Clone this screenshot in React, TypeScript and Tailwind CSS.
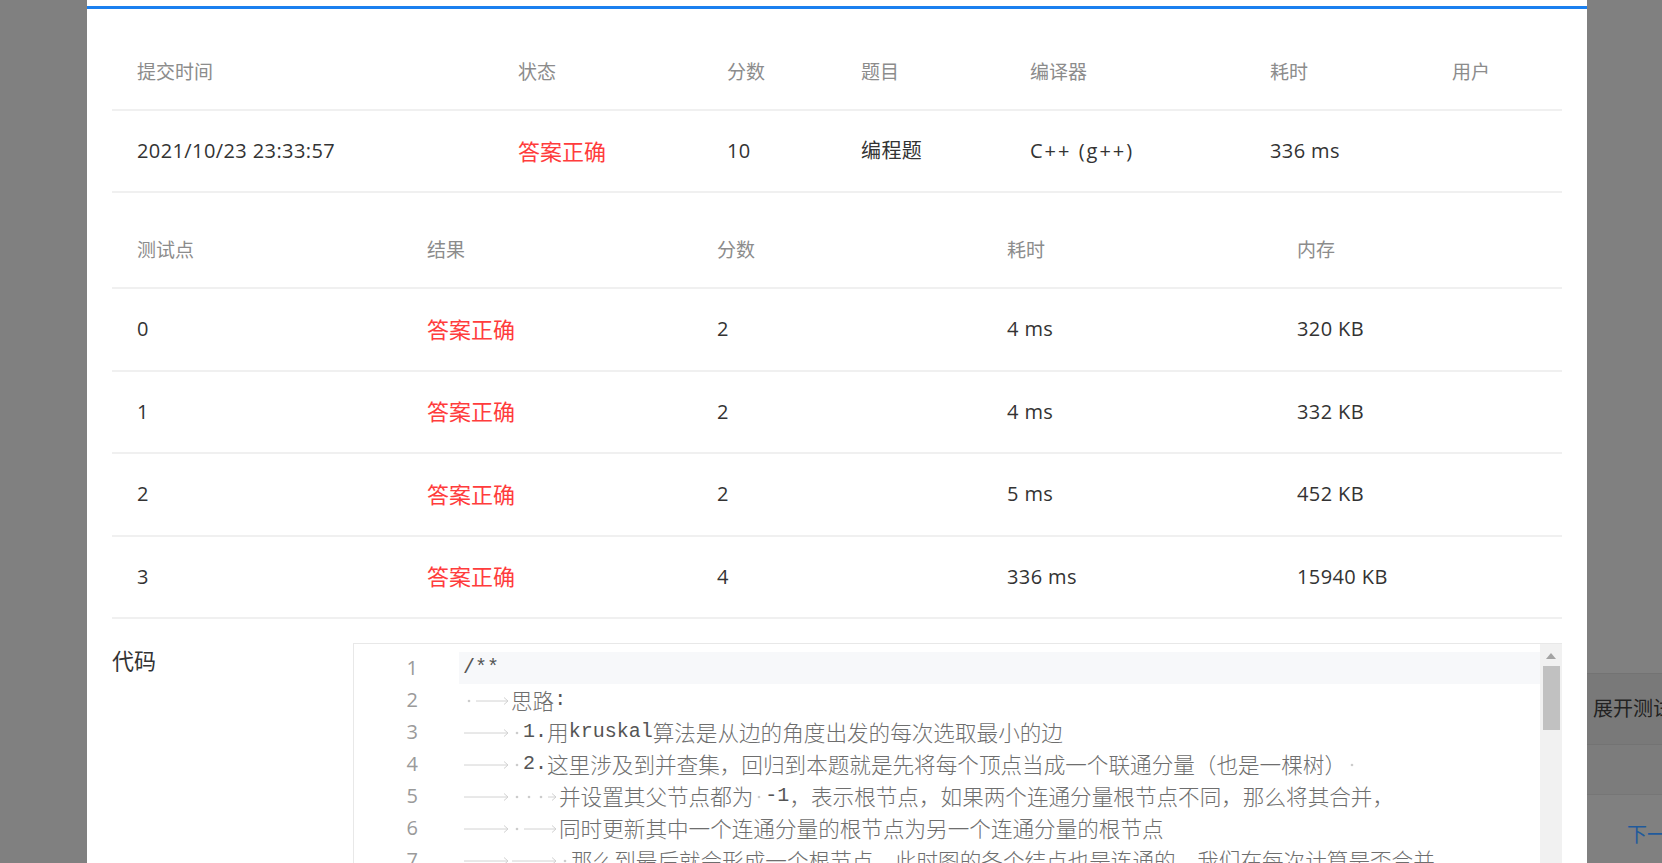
import React from "react";

type Tok =
  | { k: "tab"; w: number }
  | { k: "sp" }
  | { k: "m"; s: string }
  | { k: "c"; s: string };

const T = (w: number): Tok => ({ k: "tab", w });
const S: Tok = { k: "sp" };
const M = (s: string): Tok => ({ k: "m", s });
const C = (s: string): Tok => ({ k: "c", s });

const codeLines: Tok[][] = [
  [M("/**")],
  [S, T(36), C("思路"), M(":")],
  [T(48), S, M("1."), C("用"), M("kruskal"), C("算法是从边的角度出发的每次选取最小的边")],
  [T(48), S, M("2."), C("这里涉及到并查集，回归到本题就是先将每个顶点当成一个联通分量（也是一棵树）"), S],
  [T(48), S, S, S, T(12), C("并设置其父节点都为"), S, M("-1"), C("，表示根节点，如果两个连通分量根节点不同，那么将其合并，")],
  [T(48), S, T(36), C("同时更新其中一个连通分量的根节点为另一个连通分量的根节点")],
  [T(48), T(48), S, C("那么到最后就会形成一个根节点，此时图的各个结点也是连通的，我们在每次计算是否合并")],
];

function Tab({ w }: { w: number }) {
  return (
    <svg width={w} height={32} className="block shrink-0">
      <line x1={1} y1={17} x2={w - 3} y2={17} stroke="#d2d2d2" strokeWidth={1} />
      <path d={`M${w - 7} 13.5 L${w - 3} 17 L${w - 7} 20.5`} fill="none" stroke="#d2d2d2" strokeWidth={1} />
    </svg>
  );
}

function Dot() {
  return (
    <svg width={12} height={32} className="block shrink-0">
      <circle cx={6} cy={17} r={1.3} fill="#cccccc" />
    </svg>
  );
}

function CodeLine({ toks, active }: { toks: Tok[]; active?: boolean }) {
  return (
    <div className={`flex h-[32px] items-center whitespace-nowrap pl-[4px] ${active ? "bg-[#f7f8fa]" : ""}`}>
      {toks.map((t, i) => {
        if (t.k === "tab") return <Tab key={i} w={t.w} />;
        if (t.k === "sp") return <Dot key={i} />;
        if (t.k === "m")
          return (
            <span key={i} className="font-['Liberation_Mono',monospace] text-[20px] leading-[32px] text-[#555555]">
              {t.s}
            </span>
          );
        return (
          <span key={i} className="font-['Noto_Sans_CJK_SC',sans-serif] text-[21.6px] leading-[32px] font-light text-[#6e6e6e]">
            {t.s}
          </span>
        );
      })}
    </div>
  );
}

const head1 = ["提交时间", "状态", "分数", "题目", "编译器", "耗时", "用户"];
const row1 = ["2021/10/23 23:33:57", "答案正确", "10", "编程题", "C++ (g++)", "336 ms", ""];

const head2 = ["测试点", "结果", "分数", "耗时", "内存"];
const rows2 = [
  ["0", "答案正确", "2", "4 ms", "320 KB"],
  ["1", "答案正确", "2", "4 ms", "332 KB"],
  ["2", "答案正确", "2", "5 ms", "452 KB"],
  ["3", "答案正确", "4", "336 ms", "15940 KB"],
];

function Cell({ v }: { v: string }) {
  if (v === "答案正确") return <div className="pl-[25px] whitespace-nowrap text-[22px] text-[#ff3c3c]">{v}</div>;
  if (v === "C++ (g++)") return <div className="pl-[25px] whitespace-nowrap tracking-[2px] text-[#333333]">{v}</div>;
  return <div className="pl-[25px] whitespace-nowrap tracking-[0.4px] text-[#333333]">{v}</div>;
}

export default function App() {
  return (
    <div className="flex h-[863px] w-[1662px] overflow-hidden bg-[#808080] font-['Open_Sans','Noto_Sans_CJK_SC',sans-serif] text-[20px]">
      <div className="w-[87px] shrink-0" />
      <div className="h-full w-[1500px] shrink-0 bg-white pt-[6px]">
        <div className="h-[3px] bg-[#1b80ef]" />
        <div className="px-[25px] pt-[26px]">
          {/* submission table */}
          <div className="grid h-[76px] grid-cols-[381px_209px_134px_169px_240px_182px_135px] items-center border-b-2 border-[#f0f0f0] text-[19px] text-[#8c8c8c]">
            {head1.map((h) => (
              <div key={h} className="pl-[25px]">
                {h}
              </div>
            ))}
          </div>
          <div className="grid h-[82px] grid-cols-[381px_209px_134px_169px_240px_182px_135px] items-center border-b-2 border-[#f0f0f0]">
            {row1.map((v, i) => (
              <Cell key={i} v={v} />
            ))}
          </div>

          {/* test cases table */}
          <div className="mt-[20px] grid h-[76px] grid-cols-5 items-center border-b-2 border-[#f0f0f0] text-[19px] text-[#8c8c8c]">
            {head2.map((h) => (
              <div key={h} className="pl-[25px]">
                {h}
              </div>
            ))}
          </div>
          {rows2.map((r, ri) => (
            <div key={ri} className="grid h-[82.5px] grid-cols-5 items-center border-b-2 border-[#f0f0f0]">
              {r.map((v, i) => (
                <Cell key={i} v={v} />
              ))}
            </div>
          ))}

          {/* code */}
          <div className="mt-[24px] flex">
            <div className="w-[241px] shrink-0 text-[22px] leading-[34px] text-[#333333]">代码</div>
            <div className="flex h-[260px] flex-1 border-l border-t border-[#e8e8e8]">
              <div className="w-[105px] shrink-0 pt-[8px] text-right text-[20px] text-[#9a9a9a]">
                {codeLines.map((_, i) => (
                  <div key={i} className="h-[32px] pr-[41px] leading-[32px]">
                    {i + 1}
                  </div>
                ))}
              </div>
              <div className="min-w-0 flex-1 overflow-hidden pt-[8px]">
                {codeLines.map((l, i) => (
                  <CodeLine key={i} toks={l} active={i === 0} />
                ))}
              </div>
              <div className="flex w-[22px] shrink-0 flex-col items-center bg-[#f1f1f1] pt-[9px]">
                <svg width={10} height={6} className="block">
                  <path d="M0 6 L5 0 L10 6 Z" fill="#a3a3a3" />
                </svg>
                <div className="mt-[7px] h-[64px] w-[17px] bg-[#c1c1c1]" />
              </div>
            </div>
          </div>
        </div>
      </div>

      {/* page behind the overlay */}
      <div className="flex min-w-0 flex-1 flex-col overflow-hidden whitespace-nowrap">
        <div className="h-[673px] shrink-0" />
        <div className="flex h-[72px] shrink-0 items-center border-y border-[#737373] bg-[#797979] pl-[6px] text-[#222222]">
          展开测试点
        </div>
        <div className="h-[50px] shrink-0 border-b border-[#767676] bg-[#7c7c7c]" />
        <div className="pl-[40px] pt-[28px] leading-[24px] text-[#1f5a9c]">下一题</div>
      </div>
    </div>
  );
}
